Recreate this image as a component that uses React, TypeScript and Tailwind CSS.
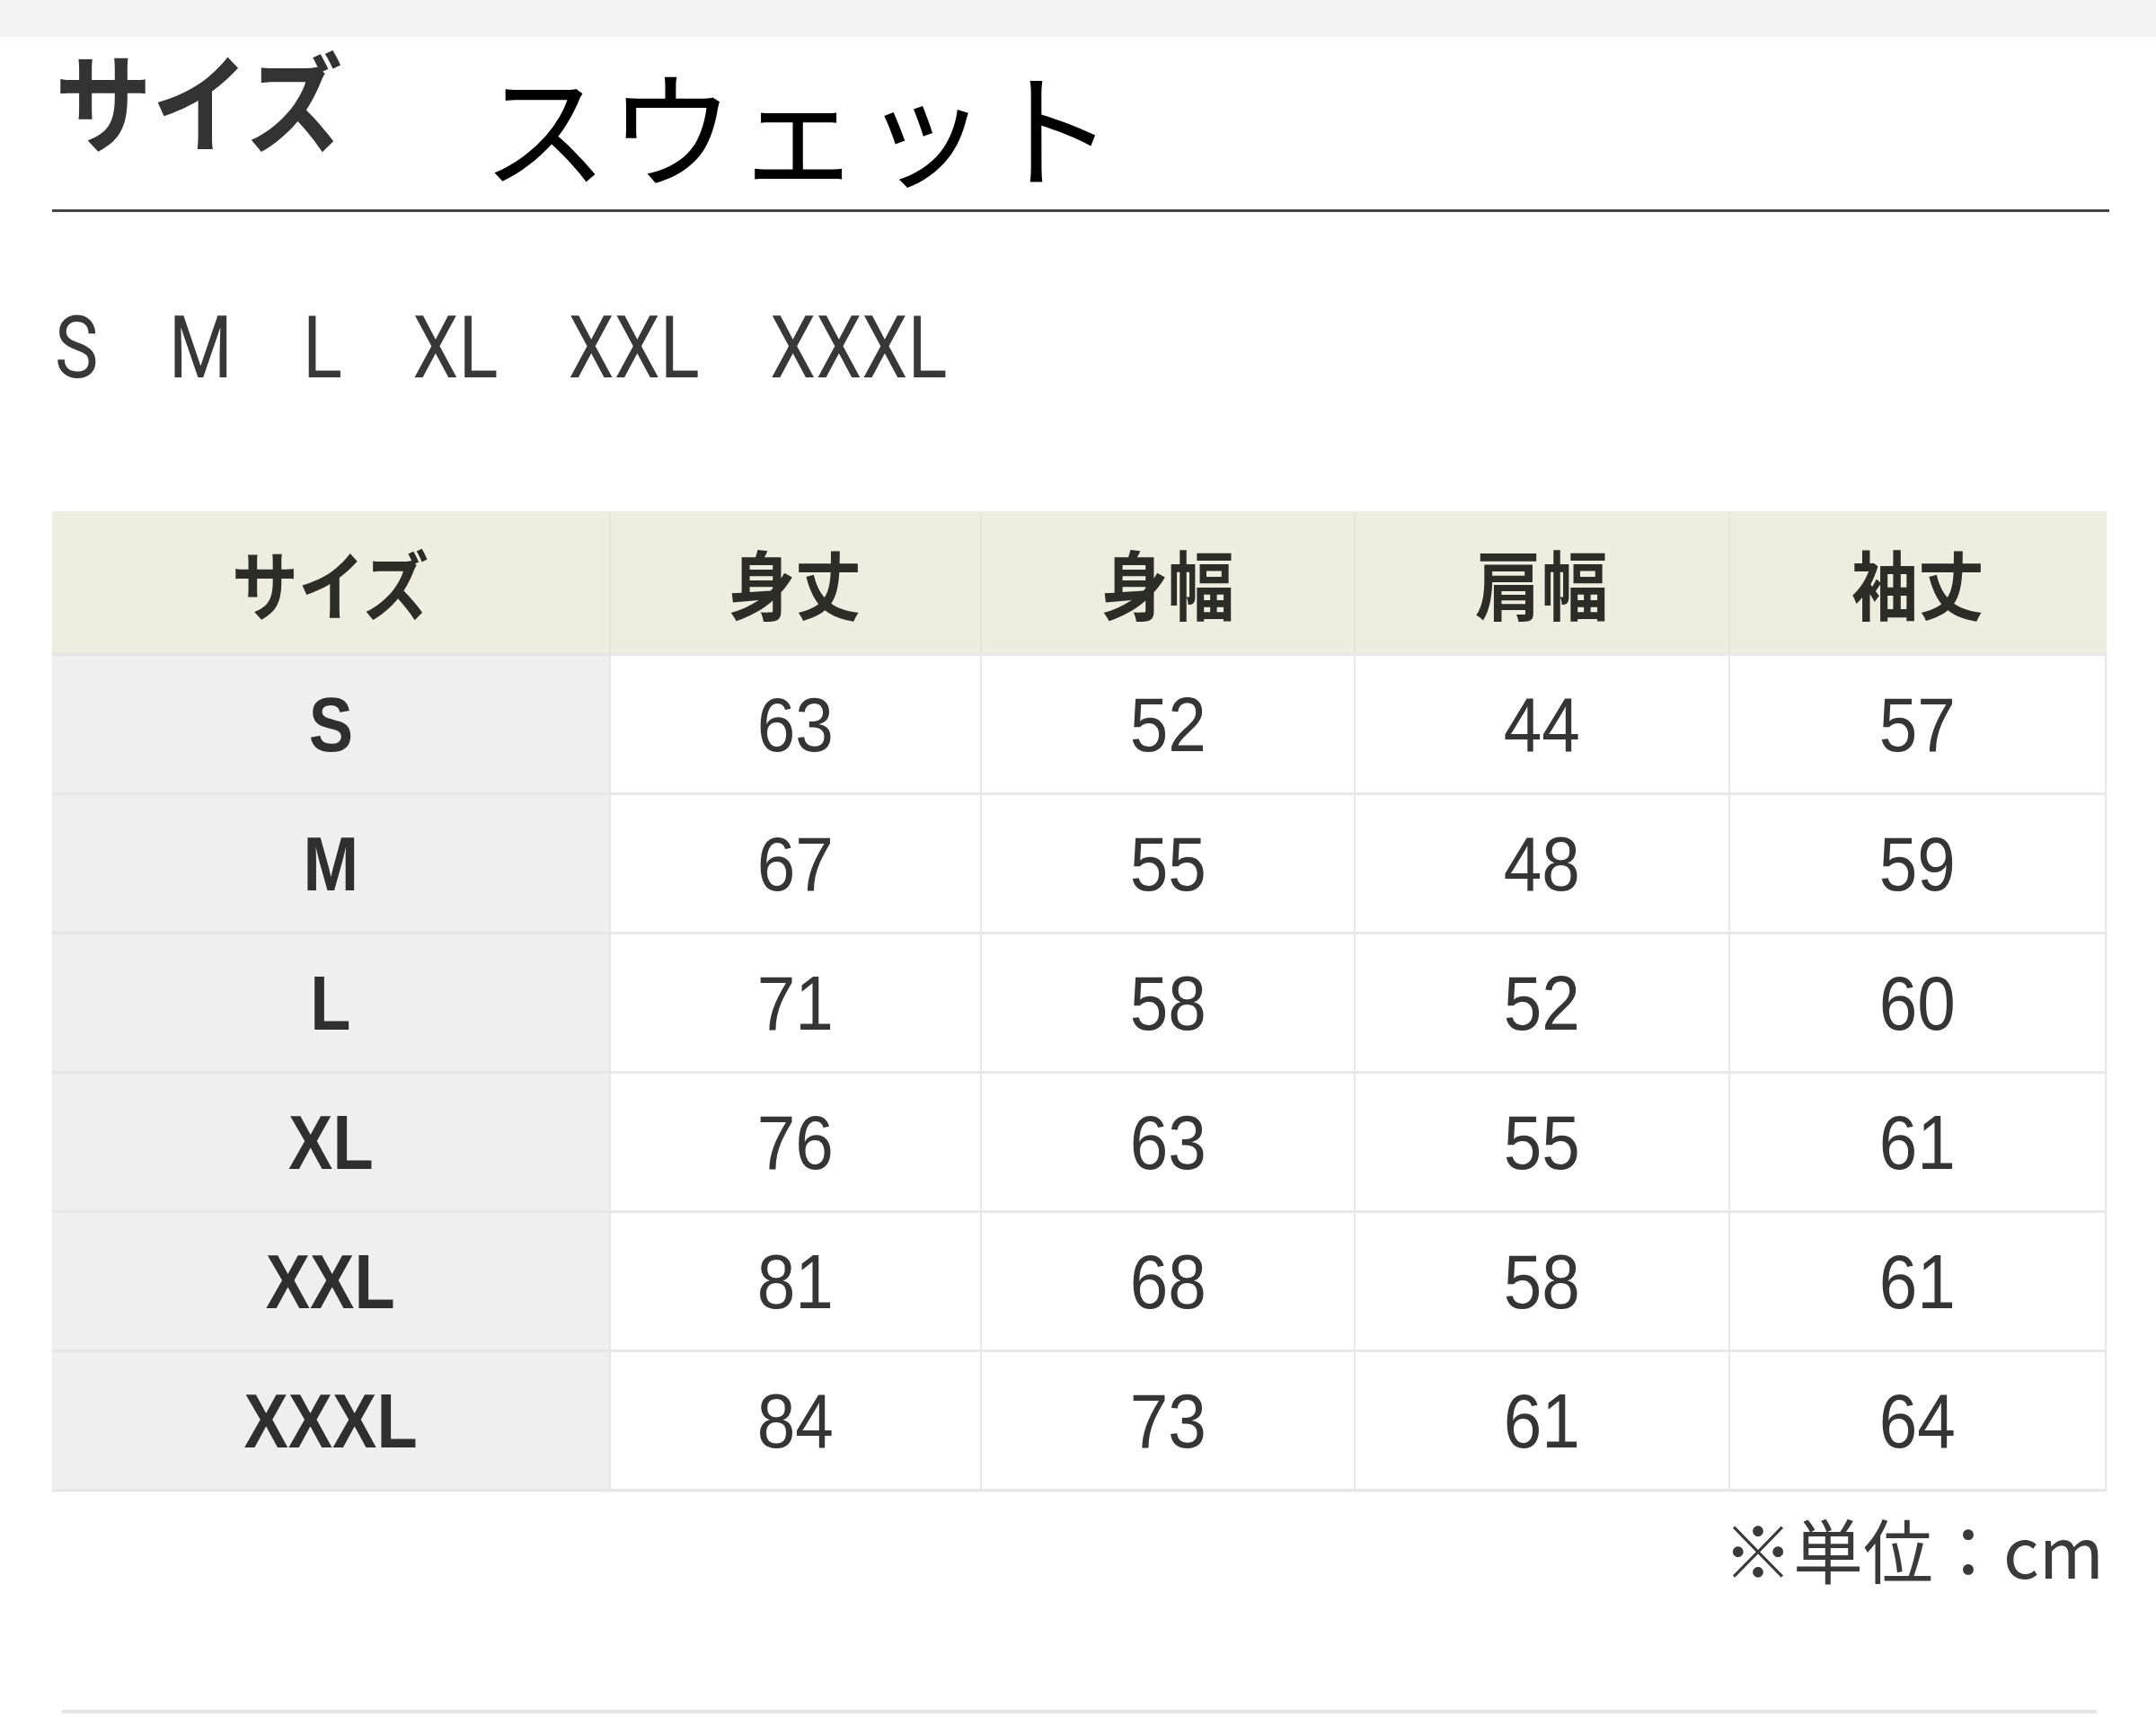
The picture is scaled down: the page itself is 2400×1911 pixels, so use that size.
import type { FC } from 'react';

const cjk = "font-['Noto_Sans_CJK_JP',sans-serif]";
const latin = "font-['Liberation_Sans','Noto_Sans_CJK_JP',sans-serif]";

const headers = ['サイズ', '身丈', '身幅', '肩幅', '袖丈'];

const rows: [string, number, number, number, number][] = [
	['S', 63, 52, 44, 57],
	['M', 67, 55, 48, 59],
	['L', 71, 58, 52, 60],
	['XL', 76, 63, 55, 61],
	['XXL', 81, 68, 58, 61],
	['XXXL', 84, 73, 61, 64],
];

const sizes = ['S', 'M', 'L', 'XL', 'XXL', 'XXXL'];

const gridCols = 'grid grid-cols-[622px_413px_416px_417px_419px]';

const SizeTable: FC = () => (
	<div className="ml-[58px] mt-[134px] w-[2287px] shadow-[0_1px_3px_rgba(0,0,0,0.06)]">
		<div className={`${gridCols} h-[158px] bg-[#eeeee0]`}>
			{headers.map((h, i) => (
				<div
					key={h}
					className={`flex items-center justify-center ${i < headers.length - 1 ? 'border-r-2 border-[#e6e6d8]' : ''}`}
				>
					<span className={`${cjk} inline-block scale-x-[0.88] text-[84px] leading-none font-bold text-[#2d2d28]`}>
						{h}
					</span>
				</div>
			))}
		</div>
		{rows.map(([label, ...vals]) => (
			<div key={label} className={`${gridCols} h-[155px]`}>
				<div className="flex items-center justify-center border-t-[3px] border-r-2 border-[#e6e6e6] bg-[#efefef]">
					<span className={`${latin} inline-block scale-x-[0.87] text-[85px] leading-none font-bold text-[#2f2f2f]`}>
						{label}
					</span>
				</div>
				{vals.map((v, i) => (
					<div
						key={i}
						className="flex items-center justify-center border-t-[3px] border-r-2 border-[#e8e8e8] bg-white"
					>
						<span className={`${latin} inline-block scale-x-[0.9] text-[85px] leading-none text-[#353535]`}>
							{v}
						</span>
					</div>
				))}
			</div>
		))}
		<div className="h-[3px] bg-[#e6e6e6]" />
	</div>
);

export default function App() {
	return (
		<div className="w-[2400px] h-[1911px] overflow-hidden bg-white">
			<div className="h-[41px] bg-[#f4f4f4]" />

			<div className="flex items-start pl-[61px]">
				<span
					className={`${cjk} mt-[8px] inline-block origin-left scale-x-[0.9] text-[120px] leading-none font-bold text-[#333]`}
				>
					サイズ
				</span>
				<span className={`${cjk} ml-[119px] mt-[26px] text-[140px] leading-none tracking-[1px] text-black`}>
					スウェット
				</span>
			</div>

			<div className="ml-[58px] mr-[52px] mt-[26px] h-[3px] bg-[#444]" />

			<div className="ml-[61px] mt-[103px] flex origin-left scale-x-[0.85] gap-[92px] font-['Roboto',sans-serif] text-[96px] leading-none text-[#383838]">
				{sizes.map((s) => (
					<span key={s}>{s}</span>
				))}
			</div>

			<SizeTable />

			<div className={`${cjk} mr-[58px] mt-[24px] text-right text-[78px] leading-none text-[#3a3a3a]`}>
				※単位：cm
			</div>

			<div className="ml-[69px] mr-[66px] mt-[141px] h-[4px] bg-[#e4e4e4]" />
		</div>
	);
}
